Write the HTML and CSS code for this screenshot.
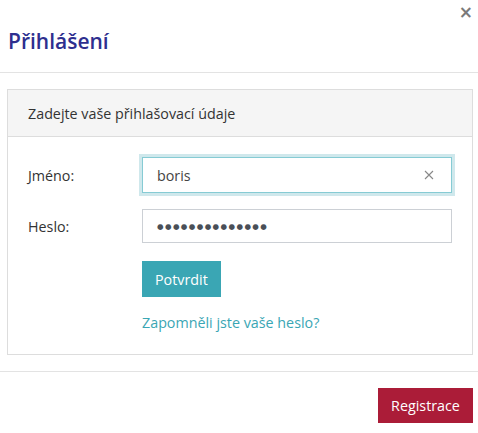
FILE: index.html
```html
<!DOCTYPE html>
<html lang="cs">
<head>
<meta charset="utf-8">
<link rel="stylesheet" href="styles.css">
</head>
<body>
<div class="modal">
  <div class="modal-header">
    <h1 class="title">Přihlášení</h1>
    <button class="close" type="button" aria-label="Zavřít">×</button>
  </div>
  <div class="modal-body">
    <div class="panel">
      <div class="panel-heading">Zadejte vaše přihlašovací údaje</div>
      <div class="panel-body">
        <div class="row">
          <label class="label">Jméno:</label>
          <div class="field focused">
            <input class="input" type="text" value="boris">
            <button class="clear" type="button" aria-label="Vymazat">
              <svg width="10" height="10" viewBox="0 0 10 10"><path d="M1 1L9 9M9 1L1 9" stroke="#888" stroke-width="1.1" fill="none"/></svg>
            </button>
          </div>
        </div>
        <div class="row">
          <label class="label">Heslo:</label>
          <div class="field pw">
            <span class="dots">●●●●●●●●●●●●●●</span>
          </div>
        </div>
        <div class="row">
          <span class="label"></span>
          <div class="actions">
            <button class="btn-primary" type="button">Potvrdit</button>
            <a class="link" href="#">Zapomněli jste vaše heslo?</a>
          </div>
        </div>
      </div>
    </div>
  </div>
  <div class="modal-footer">
    <button class="btn-danger" type="button">Registrace</button>
  </div>
</div>
</body>
</html>
```

FILE: styles.css
```css
* { box-sizing: border-box; }
html, body { margin: 0; padding: 0; background: #fff; }
body {
  font-family: "Open Sans", "Noto Sans", sans-serif;
  font-size: 14.3px;
  color: #333;
  width: 478px;
  height: 433px;
  overflow: hidden;
}
.modal-header {
  position: relative;
  padding: 27px 8px 17px 8px;
  border-bottom: 1px solid #e3e3e3;
}
.title {
  margin: 0;
  font-size: 21px;
  line-height: 28px;
  font-weight: 600;
  color: #2e2f8f;
}
.close {
  position: absolute;
  top: 2px;
  right: 5px;
  border: 0;
  background: none;
  padding: 0;
  font-family: "DejaVu Sans", sans-serif;
  font-size: 17px;
  font-weight: bold;
  line-height: 20px;
  color: #7a7a7a;
}
.modal-body {
  padding: 16px 5px 16px 7px;
}
.panel {
  border: 1px solid #ddd;
}
.panel-heading {
  background: #f5f5f5;
  border-bottom: 1px solid #ddd;
  height: 47px;
  padding: 0 20px;
  display: flex;
  align-items: center;
  color: #333;
}
.panel-body {
  padding: 20px 20px 21px 20px;
  display: flex;
  flex-direction: column;
  gap: 16px;
}
.row {
  display: grid;
  grid-template-columns: 114px 310px;
  align-items: center;
}
.label {
  color: #333;
}
.field {
  height: 34px;
  border: 1px solid #ccd0d5;
  display: flex;
  align-items: center;
  padding: 0 12px 0 14px;
}
.field.focused {
  height: 36px;
  border-color: #86cbd4;
  box-shadow: 0 0 0 3px #cfe8ec;
}
.input {
  flex: 1;
  border: 0;
  outline: none;
  font: inherit;
  color: #444;
  padding: 0;
  background: transparent;
}
.clear {
  border: 0;
  background: none;
  padding: 0;
  display: flex;
  width: 10px;
  height: 10px;
  margin-right: 5px;
}
.dots {
  font-family: "DejaVu Sans", sans-serif;
  font-size: 7.5px;
  letter-spacing: 1.4px;
  color: #4a4f57;
}
.actions {
  display: flex;
  flex-direction: column;
  align-items: flex-start;
  gap: 16px;
  margin-top: 2px;
}
.btn-primary {
  background: #3aa6b4;
  color: #fff;
  border: 0;
  height: 36px;
  padding: 0 13px;
  font: inherit;
}
.link {
  color: #3aa6b4;
  text-decoration: none;
  line-height: 20px;
}
.modal-footer {
  border-top: 1px solid #e3e3e3;
  padding: 16px 5px 10px 0;
  display: flex;
  justify-content: flex-end;
}
.btn-danger {
  background: #ab1c38;
  color: #fff;
  border: 0;
  height: 35px;
  width: 95px;
  padding: 0;
  font: inherit;
}
```
